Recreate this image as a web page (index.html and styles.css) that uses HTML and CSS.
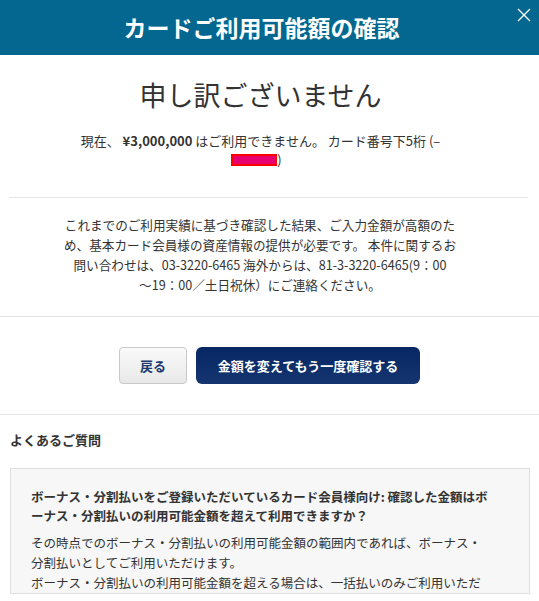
FILE: index.html
```html
<!DOCTYPE html>
<html lang="ja">
<head>
<meta charset="utf-8">
<title>カードご利用可能額の確認</title>
<link rel="stylesheet" href="styles.css">
</head>
<body>
<div class="modal">
  <header class="modal-header">
    <h1 class="modal-title">カードご利用可能額の確認</h1>
    <button class="close" aria-label="閉じる">
      <svg width="14" height="14" viewBox="0 0 14 14"><path d="M1 1L13 13M13 1L1 13" stroke="#fff" stroke-width="1.4" fill="none"/></svg>
    </button>
  </header>

  <section class="result">
    <h2 class="sorry">申し訳ございません</h2>
    <p class="message">現在、 <b>¥3,000,000</b> はご利用できません。 カード番号下5桁 (– <span class="redact"></span>)</p>
  </section>

  <hr class="rule rule-inset">

  <p class="notice">これまでのご利用実績に基づき確認した結果、ご入力金額が高額のため、基本カード会員様の資産情報の提供が必要です。 本件に関するお問い合わせは、03-3220-6465 海外からは、81-3-3220-6465<span class="nowrap">(9：00</span><span class="nowrap">〜19：00</span>／土日祝休）にご連絡ください。</p>

  <hr class="rule">

  <div class="actions">
    <button class="btn btn-back">戻る</button>
    <button class="btn btn-primary">金額を変えてもう一度確認する</button>
  </div>

  <hr class="rule">

  <section class="faq">
    <h3 class="faq-title">よくあるご質問</h3>
    <div class="faq-box">
      <p class="faq-q">ボーナス・分割払いをご登録いただいているカード会員様向け: 確認した金額はボーナス・分割払いの利用可能金額を超えて利用できますか？</p>
      <p class="faq-a">その時点でのボーナス・分割払いの利用可能金額の範囲内であれば、ボーナス・分割払いとしてご利用いただけます。<br>ボーナス・分割払いの利用可能金額を超える場合は、一括払いのみご利用いただけます。</p>
    </div>
  </section>
</div>
</body>
</html>
```

FILE: styles.css
```css
html, body {
  margin: 0;
  padding: 0;
  background: #fff;
}

body {
  font-family: "Noto Sans CJK JP", "Liberation Sans", sans-serif;
  color: #333;
  font-size: 13px;
}

.modal {
  width: 539px;
  height: 601px;
  overflow: hidden;
}

.modal-header {
  position: relative;
  height: 55px;
  background: #03678f;
  display: flex;
  align-items: center;
  justify-content: center;
  padding-right: 16px;
}

.modal-title {
  margin: 0;
  color: #fff;
  font-size: 23px;
  font-weight: 700;
  letter-spacing: 0;
  line-height: 1;
}

.close {
  position: absolute;
  top: 7px;
  right: 7px;
  width: 16px;
  height: 16px;
  padding: 0;
  border: 0;
  background: none;
  display: flex;
  align-items: center;
  justify-content: center;
}

.result {
  text-align: center;
  padding: 0 18px 0 0;
}

.sorry {
  margin: 22px 0 0;
  font-size: 27px;
  font-weight: 400;
  line-height: 36px;
  letter-spacing: 0;
}

.message {
  width: 396px;
  margin: 18px auto 0;
  line-height: 19px;
}

.message b {
  font-weight: 700;
}

.redact {
  display: inline-block;
  width: 42px;
  height: 8px;
  margin-left: -8px;
  background: #e6006f;
  border: 2px solid #f00;
  vertical-align: -1px;
}

.rule {
  margin: 0;
  border: 0;
  border-top: 1px solid #e4e4e4;
}

.rule-inset {
  margin: 28px 11px 0 9px;
}

.notice {
  width: 396px;
  margin: 17px 0 21px 62px;
  text-align: center;
  line-height: 20px;
  font-size: 12.6px;
  line-break: loose;
}

.nowrap {
  white-space: nowrap;
}

.actions {
  display: flex;
  justify-content: center;
  gap: 9px;
  padding: 30px 0;
}

.btn {
  font-family: inherit;
  font-size: 13px;
  font-weight: 700;
  height: 37px;
  cursor: pointer;
}

.btn-back {
  width: 68px;
  border: 1px solid #c9c9c9;
  border-radius: 4px;
  background: linear-gradient(#fafafa, #e8e8e8);
  color: #1c3a6e;
}

.btn-primary {
  width: 224px;
  border: 0;
  border-radius: 6px;
  background: linear-gradient(#062763, #14356f);
  color: #fff;
}

.faq {
  padding: 0 9px 0 10px;
  font-size: 12.5px;
}

.faq-title {
  margin: 16px 0 0;
  font-size: 13px;
  font-weight: 700;
  line-height: 18px;
}

.faq-box {
  margin-top: 19px;
  height: 126px;
  overflow: hidden;
  background: #f7f7f7;
  border: 1px solid #dedede;
  padding: 18px 38px 0 20px;
  box-sizing: border-box;
}

.faq-q {
  margin: 0;
  font-weight: 700;
  line-height: 19px;
}

.faq-a {
  margin: 8px 0 0;
  line-height: 20px;
}
```
